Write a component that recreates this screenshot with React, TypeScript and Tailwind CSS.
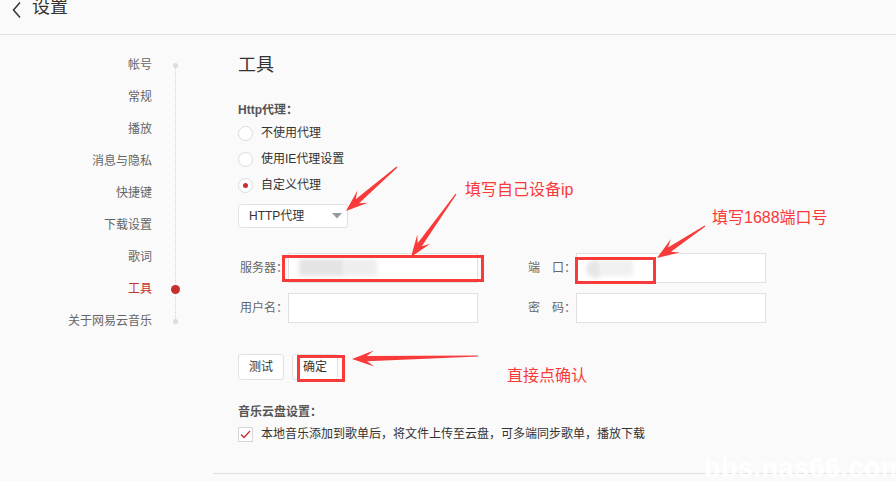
import React from 'react';

type Pt = [number, number];

// tapered annotation arrow: thin tail, swept-back head
const arrowPoints = (from: Pt, to: Pt, head = 22, halfW = 8, shaft = 2.6) => {
  const dx = to[0] - from[0];
  const dy = to[1] - from[1];
  const len = Math.hypot(dx, dy);
  const ux = dx / len;
  const uy = dy / len;
  const nx = -uy;
  const ny = ux;
  const at = (d: number, s: number): string =>
    `${(to[0] - ux * d + nx * s).toFixed(1)},${(to[1] - uy * d + ny * s).toFixed(1)}`;
  return [
    `${(from[0] + nx * 0.6).toFixed(1)},${(from[1] + ny * 0.6).toFixed(1)}`,
    at(head - 7, shaft),
    at(head, halfW),
    `${to[0]},${to[1]}`,
    at(head, -halfW),
    at(head - 7, -shaft),
    `${(from[0] - nx * 0.6).toFixed(1)},${(from[1] - ny * 0.6).toFixed(1)}`,
  ].join(' ');
};

const arrows: { from: Pt; to: Pt }[] = [
  { from: [397, 167], to: [346, 211] },
  { from: [456, 194], to: [411, 257] },
  { from: [705, 226], to: [657, 258] },
  { from: [478, 356], to: [352, 359] },
];

const menu = ['帐号', '常规', '播放', '消息与隐私', '快捷键', '下载设置', '歌词', '工具', '关于网易云音乐'];
const active = '工具';

const Radio = ({ checked, label }: { checked?: boolean; label: string }) => (
  <div className="h-[26px] flex items-center">
    <span className="w-[15px] h-[15px] rounded-full border border-[#dcdcdc] bg-white flex items-center justify-center">
      {checked && <span className="w-[5px] h-[5px] rounded-full bg-[#c62f2f]" />}
    </span>
    <span className="ml-[8px] text-[12px] text-[#333]">{label}</span>
  </div>
);

const Field = ({ label, children }: { label: string; children?: React.ReactNode }) => (
  <div className="flex items-center shrink-0">
    <span className="w-[50px] shrink-0 whitespace-nowrap pl-[2px] text-[12px] text-[#666]">{label}</span>
    <div className="relative w-[190px] h-[30px] shrink-0 border border-[#e1e1e1] bg-white overflow-hidden">{children}</div>
  </div>
);

const Field2 = ({ label, children }: { label: string; children?: React.ReactNode }) => (
  <div className="flex items-center shrink-0 ml-[50px]">
    <span className="w-[48px] shrink-0 whitespace-nowrap text-[12px] text-[#666]">{label}</span>
    <div className="relative w-[190px] h-[30px] shrink-0 border border-[#e1e1e1] bg-white overflow-hidden">{children}</div>
  </div>
);

export default function App() {
  return (
    <div className="relative w-[896px] h-[481px] overflow-hidden bg-[#fafafa] font-['Liberation_Sans','Noto_Sans_CJK_SC',sans-serif]">
      {/* top bar */}
      <header className="h-[35px] border-b border-[#e1e1e1] flex items-start pl-[11px]">
        <svg width="12" height="18" viewBox="0 0 12 18" className="mt-[1px]">
          <path d="M9 1.5 L2.5 9 L9 16.5" fill="none" stroke="#333" strokeWidth="1.5" />
        </svg>
        <span className="ml-[9px] -mt-[5px] text-[18px] leading-[24px] text-[#333]">设置</span>
      </header>

      <div className="flex">
        {/* side menu with timeline */}
        <aside className="relative w-[213px] shrink-0 pt-[14px]">
          <div className="absolute left-[175px] top-[30px] h-[256px] border-l border-dotted border-[#d6d6d6]" />
          {menu.map((item, i) => {
            const isActive = item === active;
            const edge = i === 0 || i === menu.length - 1;
            return (
              <div key={item} className="h-[32px] flex items-center">
                <span
                  className={`w-[152px] text-right text-[12px] ${isActive ? 'text-[#c62f2f]' : 'text-[#666]'}`}
                >
                  {item}
                </span>
                <span className="relative w-[46px] flex justify-center">
                  {isActive ? (
                    <span className="w-[9px] h-[9px] rounded-full bg-[#c62f2f]" />
                  ) : edge ? (
                    <span className="w-[5px] h-[5px] rounded-full bg-[#dcdcdc]" />
                  ) : null}
                </span>
              </div>
            );
          })}
        </aside>

        <main className="flex-1">
          <div className="pl-[25px] pt-[14px]">
            <h2 className="h-[32px] leading-[32px] text-[18px] text-[#333]">工具</h2>

            <div className="mt-[19px] h-[20px] leading-[20px] text-[12px] font-bold text-[#555]">Http代理：</div>
            <Radio label="不使用代理" />
            <Radio label="使用IE代理设置" />
            <Radio label="自定义代理" checked />

            <div className="mt-[6px] w-[110px] h-[24px] rounded-[3px] border border-[#e1e1e1] bg-white flex items-center justify-between pl-[10px] pr-[5px]">
              <span className="text-[12px] text-[#333]">HTTP代理</span>
              <svg width="10" height="6" viewBox="0 0 10 6">
                <path d="M0 0 H10 L5 5.5 Z" fill="#999" />
              </svg>
            </div>

            <div className="mt-[25px] flex">
              <Field label="服务器：">
                <span className="absolute left-[10px] top-[5px] w-[46px] h-[17px] bg-[#e4e4e4] blur-[2px]" />
                <span className="absolute left-[54px] top-[5px] w-[34px] h-[17px] bg-[#eeeeee] blur-[2px]" />
              </Field>
              <Field2 label="端　口：">
                <span className="absolute left-[9px] top-[6px] w-[18px] h-[18px] rounded-full bg-[#e6e6e6] blur-[2px]" />
                <span className="absolute left-[22px] top-[6px] w-[34px] h-[16px] bg-[#f0f0f0] blur-[2px]" />
              </Field2>
            </div>
            <div className="mt-[10px] flex">
              <Field label="用户名：" />
              <Field2 label="密　码：" />
            </div>

            <div className="mt-[31px] flex gap-[8px]">
              <button className="w-[46px] h-[26px] rounded-[3px] border border-[#e1e1e1] bg-white text-[12px] text-[#333]">测试</button>
              <button className="w-[46px] h-[26px] rounded-[3px] border border-[#e1e1e1] bg-white text-[12px] text-[#333]">确定</button>
            </div>

            <div className="mt-[22px] h-[20px] leading-[20px] text-[12px] font-bold text-[#555]">音乐云盘设置：</div>
            <div className="h-[24px] flex items-center">
              <span className="w-[15px] h-[15px] border border-[#d6d6d6] bg-white flex items-center justify-center">
                <svg width="11" height="9" viewBox="0 0 11 9">
                  <path d="M1 4.5 L4 7.5 L10 1" fill="none" stroke="#c62f2f" strokeWidth="1.3" />
                </svg>
              </span>
              <span className="ml-[8px] text-[12px] text-[#333]">本地音乐添加到歌单后，将文件上传至云盘，可多端同步歌单，播放下载</span>
            </div>
          </div>
          <div className="mt-[27px] border-t border-[#e1e1e1]" />
        </main>
      </div>

      {/* markup layer */}
      <svg className="pointer-events-none absolute inset-0" width="896" height="481">
        {arrows.map((a, i) => (
          <polygon key={i} points={arrowPoints(a.from, a.to)} fill="#f83a3a" />
        ))}
        <rect x="283.5" y="256.5" width="199" height="24" fill="none" stroke="#f83a3a" strokeWidth="3" />
        <rect x="576.5" y="258.5" width="78" height="24" fill="none" stroke="#f83a3a" strokeWidth="3" />
        <rect x="298.5" y="356.5" width="45" height="24" fill="none" stroke="#f83a3a" strokeWidth="3" />
      </svg>
      <span className="absolute left-[465px] top-[179px] text-[16px] leading-[22px] text-[#f83a3a]">填写自己设备ip</span>
      <span className="absolute left-[712px] top-[207px] text-[16px] leading-[22px] text-[#f83a3a]">填写1688端口号</span>
      <span className="absolute left-[507px] top-[365px] text-[16px] leading-[22px] text-[#f83a3a]">直接点确认</span>

      <span className="absolute left-[704px] top-[452px] text-[27px] leading-[32px] font-black tracking-[0.5px] text-white/90 font-['Liberation_Sans',sans-serif]">
        bbs.nas66.com
      </span>
    </div>
  );
}
